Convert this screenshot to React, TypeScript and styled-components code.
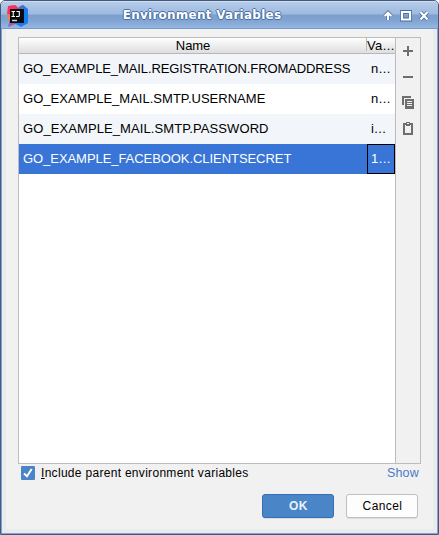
import React from "react";
import styled, { createGlobalStyle } from "styled-components";

const GlobalStyle = createGlobalStyle`
  html, body { margin: 0; padding: 0; }
  body { background: #fff; overflow: hidden; }
  * { box-sizing: border-box; }
`;

const Window = styled.div`
  width: 439px;
  height: 535px;
  display: flex;
  flex-direction: column;
  background: #ebebeb;
  border: 1px solid #44597c;
  border-radius: 5px 5px 0 0;
  box-shadow: inset 0 0 0 1px #7ea3d4;
  font-family: "Liberation Sans", sans-serif;
  font-size: 13px;
  color: #000;
  overflow: hidden;
`;

const TitleBar = styled.header`
  height: 28px;
  flex: none;
  display: grid;
  grid-template-columns: 40px 1fr 76px;
  align-items: center;
  padding: 0 0 1px;
  border-top: 1px solid #cfdff3;
  border-bottom: 1px solid #759bcb;
  background: linear-gradient(#b5cbe8 0, #9dbadf 12px, #7d9fcd 13px, #7fa2d1 18px, #94b6e2 26px);
`;

const Logo = styled.svg`
  width: 22px;
  height: 23px;
  margin: 2px 0 0 6px;
  display: block;
`;

const Title = styled.h1`
  margin: 0;
  padding-left: 1px;
  text-align: center;
  font: bold 12px/26px "DejaVu Sans", sans-serif;
  letter-spacing: 0.25px;
  color: #fff;
  text-shadow: 1px 0 #486fa6, -1px 0 #486fa6, 0 1px #486fa6, 0 -1px #486fa6;
  white-space: nowrap;
`;

const Controls = styled.svg`
  width: 58px;
  height: 26px;
  display: block;
  justify-self: end;
`;

const Content = styled.main`
  flex: 1;
  margin: 0 5px 5px;
  padding: 8px 12px 0;
  background: #f1f1f1;
  display: flex;
  flex-direction: column;
`;

const Panel = styled.section`
  width: 403px;
  height: 427px;
  flex: none;
  display: flex;
  border: 1px solid #bcbcbc;
`;

const Table = styled.div`
  width: 376px;
  background: #fff;
`;

const HeaderRow = styled.div`
  height: 16px;
  display: grid;
  grid-template-columns: 348px 28px;
  background: linear-gradient(#fefefe, #dedede);
  border-bottom: 1px solid #b7b7b7;
  line-height: 15px;
`;

const HeaderCell = styled.div<{ $divided?: boolean }>`
  text-align: ${(p) => (p.$divided ? "left" : "center")};
  padding-left: ${(p) => (p.$divided ? "0" : "1px")};
  letter-spacing: ${(p) => (p.$divided ? "0.4px" : "-0.1px")};
  border-right: ${(p) => (p.$divided ? "0" : "1px solid #b9b9b9")};
  white-space: nowrap;
  height: 13px;
`;

const Row = styled.div<{ $bg: string; $selected?: boolean }>`
  height: 30px;
  display: grid;
  grid-template-columns: 348px 28px;
  background: ${(p) => p.$bg};
  color: ${(p) => (p.$selected ? "#fff" : "#000")};
  line-height: 30px;
`;

const NameCell = styled.div<{ $spacing: number }>`
  padding-left: 4px;
  letter-spacing: ${(p) => p.$spacing}px;
  white-space: nowrap;
`;

const ValueCell = styled.div<{ $focused?: boolean }>`
  border: 1px solid ${(p) => (p.$focused ? "#000" : "transparent")};
  padding-left: 3px;
  line-height: 28px;
  letter-spacing: 0.4px;
  white-space: nowrap;
`;

const Tools = styled.aside`
  width: 25px;
  border-left: 1px solid #bcbcbc;
`;

const ToolSheet = styled.svg`
  display: block;
  width: 24px;
  height: 105px;
`;

const Options = styled.div`
  height: 18px;
  display: flex;
  align-items: center;
  padding: 0 2px 0 3px;
`;

const Check = styled.svg`
  width: 14px;
  height: 14px;
  margin-right: 6px;
`;

const Label = styled.label`
  flex: 1;
  font-size: 12px;
  line-height: 14px;
  letter-spacing: 0.3px;
`;

const Link = styled.a`
  color: #4a7cc6;
  margin-top: -1px;
  font-size: 12.5px;
  letter-spacing: 0.2px;
`;

const Buttons = styled.footer`
  display: flex;
  justify-content: flex-end;
  gap: 12px;
  padding: 12px 3px 0 0;
`;

const Button = styled.button<{ $primary?: boolean }>`
  width: 72px;
  height: 24px;
  padding: 0 0 0 1px;
  font: ${(p) => (p.$primary ? "bold" : "normal")} 12px/20px "Liberation Sans", sans-serif;
  letter-spacing: 0.4px;
  color: ${(p) => (p.$primary ? "#e8f1fc" : "#000")};
  background: ${(p) => (p.$primary ? "#4a86c7" : "#fdfdfd")};
  border: 1px solid ${(p) => (p.$primary ? "#326ebb" : "#bfbfbf")};
  border-radius: 3px;
  box-shadow: 0 1px #dddddd;
`;

const rows = [
  { name: "GO_EXAMPLE_MAIL.REGISTRATION.FROMADDRESS", value: "n...", bg: "#f2f5f9", spacing: -0.1 },
  { name: "GO_EXAMPLE_MAIL.SMTP.USERNAME", value: "n...", bg: "#ffffff", spacing: 0.02 },
  { name: "GO_EXAMPLE_MAIL.SMTP.PASSWORD", value: "i...", bg: "#f2f5f9", spacing: 0.09 },
  { name: "GO_EXAMPLE_FACEBOOK.CLIENTSECRET", value: "1...", bg: "#3875d7", spacing: -0.06, selected: true },
];

function AppLogo() {
  return (
    <Logo viewBox="0 0 22 23">
      <path d="M1 1 8 0 14 5 11 13 0 9Z" fill="#fb315b" />
      <path d="M0 10 8 8 12 15 6 19 1 14Z" fill="#f5833c" />
      <path d="M3 14 9 15 11 18 1 22Z" fill="#a75aab" />
      <path d="M12 2 16 0 21 4V18L14 22 7 18Z" fill="#197cf0" />
      <path d="M12 2 16 0 18 5H11Z" fill="#5b68bd" />
      <rect x="3" y="4" width="14" height="14" fill="#080b0d" />
      <path d="M4.5 6.5H8M6.25 6.5V11.5M4.5 11.5H8M9.5 6.5H12.3V10.5Q12.3 11.5 11.3 11.5H9" fill="none" stroke="#fff" strokeWidth="1.1" />
      <path d="M5 15.5H10" stroke="#d5d5d5" strokeWidth="1.4" />
    </Logo>
  );
}

function WindowControls() {
  const shapes = (
    <>
      <path d="M8 18V11M4.7 14 8 10.7 11.3 14" />
      <path d="M22 10H30V17.5H22Z" />
      <path d="M40.5 10 47.5 17.5M47.5 10 40.5 17.5" />
    </>
  );
  return (
    <Controls viewBox="0 0 58 26" fill="none">
      <g stroke="#456b9f" strokeWidth="3.8">{shapes}</g>
      <g stroke="#fff" strokeWidth="2.2">{shapes}</g>
    </Controls>
  );
}

function ToolIcons() {
  return (
    <ToolSheet viewBox="0 0 24 105">
      <path d="M7 13H17M12 8V18" stroke="#6e6e6e" strokeWidth="2" />
      <path d="M7 39H17" stroke="#6e6e6e" strokeWidth="2" />
      <path d="M7 67V59H15" fill="none" stroke="#6e6e6e" strokeWidth="2" />
      <path d="M9 61H18V71H9Z" fill="#6e6e6e" />
      <path d="M11 63.5H16M11 65.5H16M11 67.5H16" stroke="#f1f1f1" />
      <path d="M8 86H16V96H8Z" fill="none" stroke="#6e6e6e" strokeWidth="2" />
      <path d="M10 84H14V88H10Z" fill="#6e6e6e" />
      <path d="M11 85.5H13" stroke="#f1f1f1" />
    </ToolSheet>
  );
}

export default function App() {
  return (
    <>
      <GlobalStyle />
      <Window>
        <TitleBar>
          <AppLogo />
          <Title>Environment Variables</Title>
          <WindowControls />
        </TitleBar>
        <Content>
          <Panel>
            <Table>
              <HeaderRow>
                <HeaderCell>Name</HeaderCell>
                <HeaderCell $divided>Va...</HeaderCell>
              </HeaderRow>
              {rows.map((r) => (
                <Row key={r.name} $bg={r.bg} $selected={r.selected}>
                  <NameCell $spacing={r.spacing}>{r.name}</NameCell>
                  <ValueCell $focused={r.selected}>{r.value}</ValueCell>
                </Row>
              ))}
            </Table>
            <Tools>
              <ToolIcons />
            </Tools>
          </Panel>
          <Options>
            <Check viewBox="0 0 14 14">
              <rect width="14" height="14" rx="1" fill="#4a86c7" />
              <path d="M3 7.5 6 10.3 10.7 3" fill="none" stroke="#fff" strokeWidth="2" />
            </Check>
            <Label>
              <u>I</u>nclude parent environment variables
            </Label>
            <Link>Show</Link>
          </Options>
          <Buttons>
            <Button $primary>OK</Button>
            <Button>Cancel</Button>
          </Buttons>
        </Content>
      </Window>
    </>
  );
}
